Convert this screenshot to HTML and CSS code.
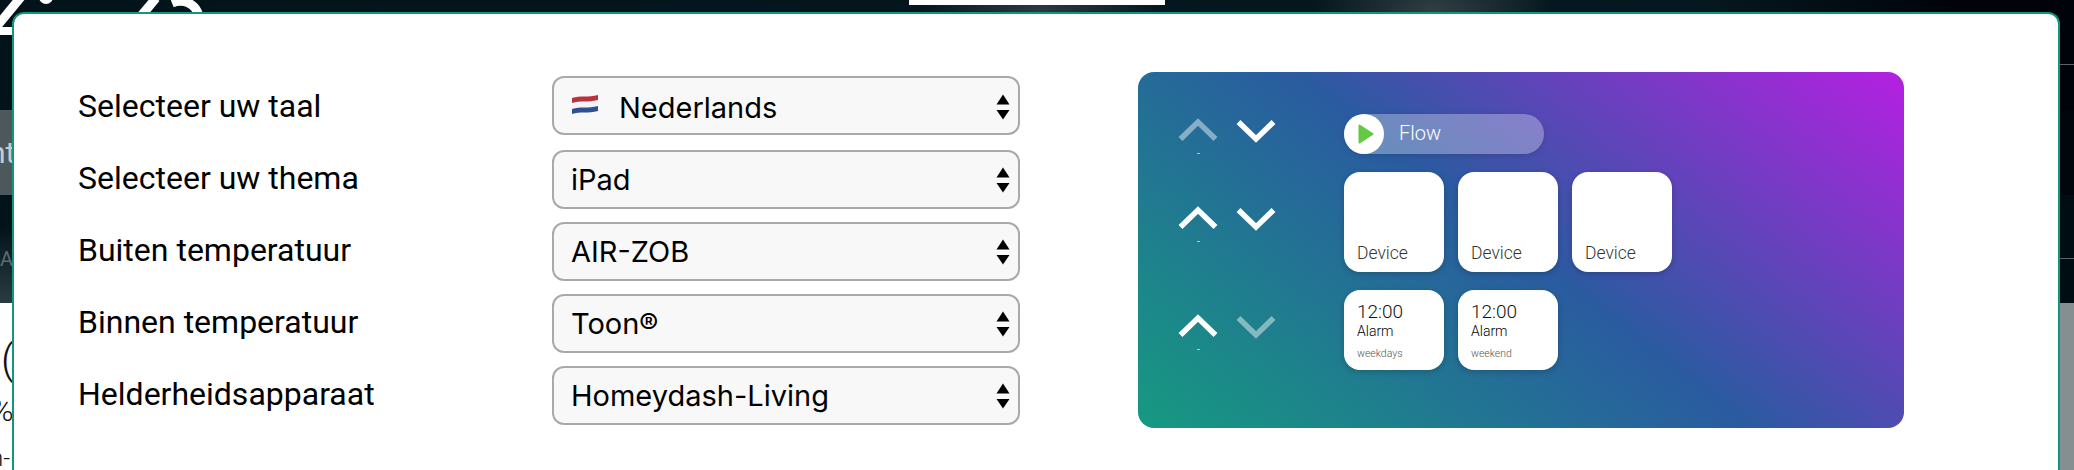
FILE: index.html
```html
<!DOCTYPE html>
<html lang="nl">
<head>
  <meta charset="UTF-8" />
  <meta name="viewport" content="width=device-width, initial-scale=1.0" />
  <title>Homeydash instellingen</title>
  <link rel="stylesheet" href="styles.css">
</head>
<body>
  <!-- Dashboard behind the dialog -->
  <div class="backdrop">
    <div class="top-bar">
      <svg class="top-art" viewBox="0 0 210 40" width="210" height="40">
        <path class="art-line" d="M21 -3 L-2 25" />
        <rect class="art-fill" x="0" y="27" width="14" height="8" />
        <circle class="art-fill" cx="46" cy="-3" r="7" />
        <path class="art-line" d="M156 -2 L141 16" />
        <path class="art-line" d="M172 3 C184 -2 196 4 199 16" />
      </svg>
      <div class="top-tab"></div>
      <div class="rule"></div>
    </div>
    <div class="band-light"><span>nt</span></div>
    <div class="band-dark">
      <span>At</span>
      <div class="rule"></div>
    </div>
    <div class="lower">
      <div class="lower-text">
        <span class="big">(</span>
        <span class="pct">%</span>
        <span class="small">n-</span>
      </div>
    </div>
  </div>

  <!-- Settings dialog -->
  <div class="modal">
    <div class="form">
      <div class="row first">
        <label>Selecteer uw taal</label>
        <div class="select">
          <svg class="flag" viewBox="0 0 26 19" width="26" height="19">
            <path fill="#b8323f" d="M0 3 C8 0 16 3 26 0 V6 C16 9 8 6 0 9 Z" />
            <path fill="#f4f4f6" d="M0 8 C8 5 16 8 26 5 V12 C16 15 8 12 0 15 Z" />
            <path fill="#2f4f95" d="M0 14 C8 11 16 14 26 11 V16 C16 19 8 16 0 19 Z" />
          </svg>
          <span>Nederlands</span>
          <svg class="arrows" viewBox="0 0 14 26" width="14" height="26"><use href="#updown" /></svg>
        </div>
      </div>
      <div class="row">
        <label>Selecteer uw thema</label>
        <div class="select"><span>iPad</span>
          <svg class="arrows" viewBox="0 0 14 26" width="14" height="26"><use href="#updown" /></svg>
        </div>
      </div>
      <div class="row">
        <label>Buiten temperatuur</label>
        <div class="select"><span>AIR-ZOB</span>
          <svg class="arrows" viewBox="0 0 14 26" width="14" height="26"><use href="#updown" /></svg>
        </div>
      </div>
      <div class="row">
        <label>Binnen temperatuur</label>
        <div class="select"><span>Toon®</span>
          <svg class="arrows" viewBox="0 0 14 26" width="14" height="26"><use href="#updown" /></svg>
        </div>
      </div>
      <div class="row">
        <label>Helderheidsapparaat</label>
        <div class="select"><span>Homeydash-Living</span>
          <svg class="arrows" viewBox="0 0 14 26" width="14" height="26"><use href="#updown" /></svg>
        </div>
      </div>
    </div>

    <!-- Theme preview -->
    <div class="preview">
      <div class="pagers">
        <div class="pager">
          <svg class="chev dim" viewBox="0 0 40 24"><use href="#chev-up" /></svg>
          <svg class="chev" viewBox="0 0 40 24"><use href="#chev-down" /></svg>
        </div>
        <div class="dash"></div>
        <div class="pager">
          <svg class="chev" viewBox="0 0 40 24"><use href="#chev-up" /></svg>
          <svg class="chev" viewBox="0 0 40 24"><use href="#chev-down" /></svg>
        </div>
        <div class="dash"></div>
        <div class="pager low">
          <svg class="chev" viewBox="0 0 40 24"><use href="#chev-up" /></svg>
          <svg class="chev dim" viewBox="0 0 40 24"><use href="#chev-down" /></svg>
        </div>
        <div class="dash"></div>
      </div>
      <div class="tiles">
        <div class="flow">
          <div class="play">
            <svg viewBox="0 0 16 20" width="16" height="20"><path d="M1.5 1.5 L14.5 10 L1.5 18.5 Z" /></svg>
          </div>
          <span>Flow</span>
        </div>
        <div class="tile-row">
          <div class="device">Device</div>
          <div class="device">Device</div>
          <div class="device">Device</div>
        </div>
        <div class="tile-row">
          <div class="alarm">
            <div class="time">12:00</div>
            <div class="name">Alarm</div>
            <div class="days">weekdays</div>
          </div>
          <div class="alarm">
            <div class="time">12:00</div>
            <div class="name">Alarm</div>
            <div class="days">weekend</div>
          </div>
        </div>
      </div>
    </div>
  </div>

  <!-- Shared icons -->
  <svg class="defs" width="0" height="0">
    <defs>
      <g id="updown">
        <path d="M7 0.5 L13.5 10.5 H0.5 Z" />
        <path d="M7 25.5 L13.5 16 H0.5 Z" />
      </g>
      <path id="chev-up" d="M2.5 21 L20 4 L37.5 21" fill="none" stroke="#fff" stroke-width="5.5" />
      <path id="chev-down" d="M2.5 4 L20 21 L37.5 4" fill="none" stroke="#fff" stroke-width="5.5" />
    </defs>
  </svg>
</body>
</html>
```

FILE: styles.css
```css
html, body {
  margin: 0;
  padding: 0;
  height: 470px;
  overflow: hidden;
}
body {
  font-family: Roboto, sans-serif;
  background: #fff;
  position: relative;
}

/* Dashboard behind the dialog */
.backdrop {
  height: 470px;
  display: flex;
  flex-direction: column;
}
.top-bar {
  height: 110px;
  flex: none;
  position: relative;
  background:
    radial-gradient(ellipse 120px 60px at 1040px 10px, #2b3a40, transparent),
    radial-gradient(ellipse 120px 60px at 1434px 10px, #2f3e43, transparent),
    linear-gradient(90deg, #02141a 0, #06181f 1700px, #00040a 1950px);
}
.top-art {
  position: absolute;
  left: 0;
  top: 0;
}
.art-line {
  fill: none;
  stroke: #fff;
  stroke-width: 9;
}
.art-fill {
  fill: #fff;
}
.top-tab {
  position: absolute;
  left: 909px;
  top: 0;
  width: 256px;
  height: 5px;
  background: #fff;
}
.rule {
  position: absolute;
  right: 0;
  top: 64px;
  width: 20px;
  height: 1px;
  background: #5d6265;
}
.band-light {
  height: 85px;
  flex: none;
  background: linear-gradient(90deg, #4d585c 0 30px, #00060c 30px);
  color: #c8cccd;
  font-size: 30px;
  line-height: 85px;
  overflow: hidden;
}
.band-light span {
  margin-left: -11px;
}
.band-dark {
  height: 108px;
  flex: none;
  position: relative;
  background:
    linear-gradient(90deg, transparent 0 30px, #000d12 30px),
    linear-gradient(#02141a 30%, #2b3b42);
  color: #5f6b70;
  font-size: 20px;
  line-height: 128px;
  overflow: hidden;
}
.band-dark .rule {
  top: 63px;
}
.lower {
  flex: 1;
  background: #858e91;
}
.lower-text {
  width: 12px;
  height: 100%;
  background: #fff;
  overflow: hidden;
  position: relative;
  color: #111;
  white-space: nowrap;
}
.lower-text span {
  position: absolute;
}
.big {
  left: 1px;
  top: 32px;
  font-size: 42px;
  font-weight: 300;
}
.pct {
  left: -10px;
  top: 88px;
  font-size: 32px;
  font-weight: 300;
}
.small {
  left: -10px;
  top: 141px;
  font-size: 24px;
  font-weight: 300;
}

/* Settings dialog */
.modal {
  position: absolute;
  left: 12px;
  top: 12px;
  width: 2048px;
  height: 470px;
  box-sizing: border-box;
  border: 2px solid #14957f;
  border-bottom: 0;
  border-radius: 12px 12px 0 0;
  background: #fff;
  padding: 58px 0 0 59px;
  display: flex;
  gap: 118px;
}
.form {
  width: 947px;
  padding-top: 4px;
  display: flex;
  flex-direction: column;
  gap: 13px;
}
.row {
  display: flex;
  align-items: center;
}
.row.first {
  margin-bottom: 2px;
}
.row label {
  width: 474px;
  padding-left: 5px;
  font-size: 32px;
  color: #000;
  margin-top: -4px;
}
.row.first label {
  margin-top: 0;
}
.select {
  width: 468px;
  height: 59px;
  box-sizing: border-box;
  border: 2px solid #a9a9a9;
  border-radius: 12px;
  background: #f8f8f8;
  padding: 0 8px 0 17px;
  display: flex;
  align-items: center;
  font-family: Inter, sans-serif;
  font-size: 29px;
  color: #000;
}
.row.first .select {
  padding-top: 3px;
}
.flag {
  margin: -5px 21px 0 1px;
  flex: none;
}
.arrows {
  margin-left: auto;
  flex: none;
}

/* Theme preview */
.preview {
  width: 766px;
  height: 356px;
  border-radius: 16px;
  background: linear-gradient(38deg, #169a80 0%, #2a5ba0 50%, #b520e2 100%);
  display: flex;
  padding: 42px 0 0 40px;
  box-sizing: border-box;
}
.pagers {
  width: 166px;
  flex: none;
  margin-top: 1px;
  display: flex;
  flex-direction: column;
  align-items: flex-start;
}
.pager {
  display: flex;
  gap: 18px;
  height: 24px;
  margin-top: 3px;
}
.pager.low {
  margin-top: 23px;
}
.chev {
  width: 40px;
  height: 24px;
  overflow: visible;
}
.dim {
  opacity: 0.45;
}
.dash {
  width: 3px;
  height: 1px;
  margin: 11px 0 49px 19px;
  background: rgba(255, 255, 255, 0.6);
}
.tiles {
  display: flex;
  flex-direction: column;
  gap: 18px;
}
.flow {
  width: 200px;
  height: 40px;
  border-radius: 20px;
  background: rgba(255, 255, 255, 0.3);
  box-shadow: 0 2px 6px rgba(0, 0, 0, 0.12);
  display: flex;
  align-items: center;
  color: #fff;
  font-size: 20px;
  font-weight: 300;
  line-height: 38px;
  gap: 15px;
}
.flow span {
  margin-top: -2px;
}
.play {
  width: 40px;
  height: 40px;
  border-radius: 50%;
  background: #fff;
  display: flex;
  align-items: center;
  justify-content: center;
}
.play svg {
  margin-left: 3px;
}
.play path {
  fill: #62c944;
  stroke: #62c944;
  stroke-width: 2;
  stroke-linejoin: round;
}
.tile-row {
  display: flex;
  gap: 14px;
}
.device, .alarm {
  width: 100px;
  box-sizing: border-box;
  background: #fff;
  border-radius: 16px;
  box-shadow: 0 2px 6px rgba(0, 0, 0, 0.2);
  padding-left: 13px;
  color: #222;
}
.device {
  height: 100px;
  font-size: 17.5px;
  font-weight: 300;
  color: #333;
  display: flex;
  align-items: flex-end;
  padding-bottom: 9px;
}
.alarm {
  height: 80px;
  padding-top: 11px;
}
.time {
  font-size: 19px;
  font-weight: 300;
  color: #111;
  line-height: 22px;
}
.name {
  font-size: 14px;
  font-weight: 300;
  color: #000;
  line-height: 18px;
  margin-top: -1px;
}
.days {
  font-size: 10.5px;
  font-weight: 300;
  color: #555;
  margin-top: 7px;
}
.defs {
  position: absolute;
}
```
